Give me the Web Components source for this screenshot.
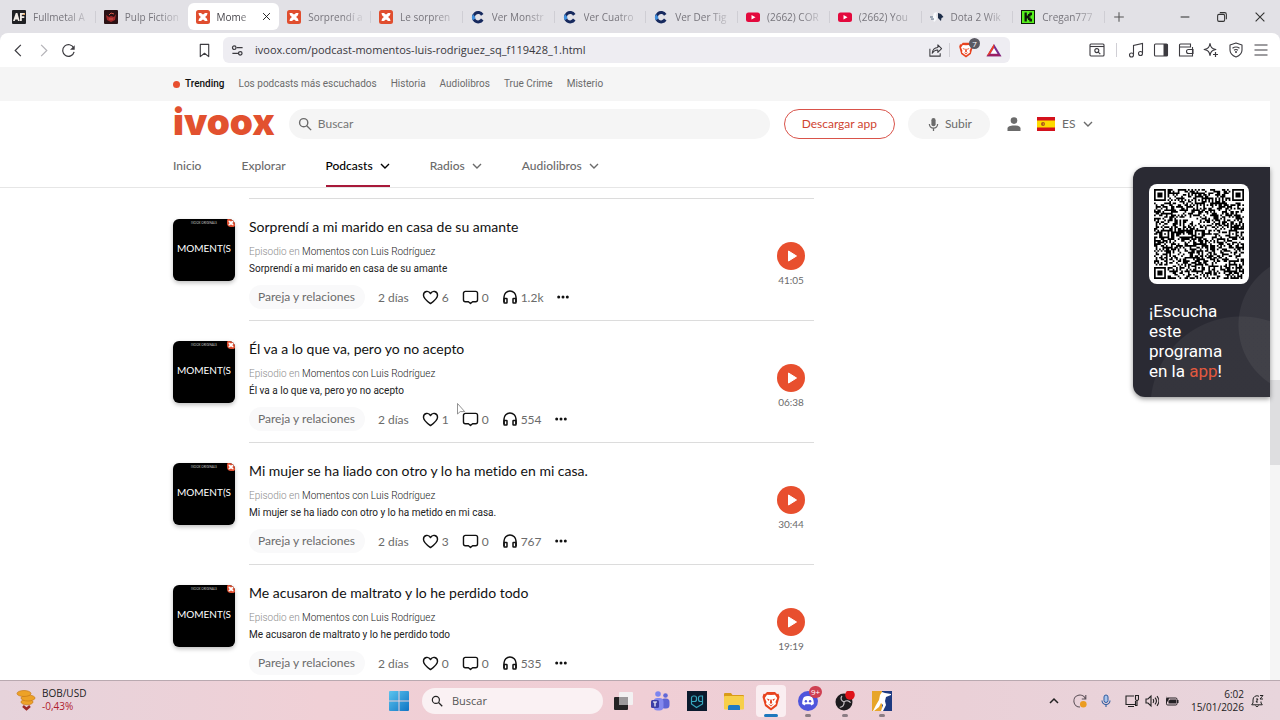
<!DOCTYPE html>
<html lang="es">
  <head>
    <meta charset="UTF-8" />
    <meta name="viewport" content="width=device-width, initial-scale=1.0" />
    <title>Momentos con Luis Rodríguez - iVoox</title>
    <style>
      :root {
        --system-font: "Open Sans", "Noto Sans", sans-serif;
        --page-font: Lato, "Open Sans", sans-serif;
        --small-font: Roboto, "Open Sans", sans-serif;
        --orange: #e84f2e;
      }
      body {
        margin: 0;
        height: 100vh;
        display: flex;
        flex-direction: column;
        overflow: hidden;
        font-family: var(--system-font);
        background: #fff;
      }
    </style>
  </head>
  <body>
    <browser-tabs></browser-tabs>
    <browser-toolbar url="ivoox.com/podcast-momentos-luis-rodriguez_sq_f119428_1.html"></browser-toolbar>
    <page-viewport>
      <trending-bar></trending-bar>
      <site-header></site-header>
      <episode-list>
        <episode-card time="41:05" likes="6" comments="0" plays="1.2k">Sorprendí a mi marido en casa de su amante</episode-card>
        <episode-card time="06:38" likes="1" comments="0" plays="554">Él va a lo que va, pero yo no acepto</episode-card>
        <episode-card time="30:44" likes="3" comments="0" plays="767">Mi mujer se ha liado con otro y lo ha metido en mi casa.</episode-card>
        <episode-card time="19:19" likes="0" comments="0" plays="535">Me acusaron de maltrato y lo he perdido todo</episode-card>
      </episode-list>
      <app-promo slot="overlay">¡Escucha este programa<br />en la <a href="#app">app</a>!</app-promo>
    </page-viewport>
    <task-bar></task-bar>
    <mouse-pointer></mouse-pointer>

    <script>
      // Icons, each one is [viewBox, markup]
      const ICONS = {
        back: ["0 0 16 16", '<path d="M10.5 2 4.5 8l6 6" fill="none" stroke="currentColor" stroke-width="1.3"/>'],
        forward: ["0 0 16 16", '<path d="M5.5 2l6 6-6 6" fill="none" stroke="currentColor" stroke-width="1.3"/>'],
        reload: ["0 0 16 16", '<path d="M14 9.5A6.2 6.2 0 1 1 13.6 5.300" fill="none" stroke="currentColor" stroke-width="1.3"/><path d="M14.600 2.300v5h-5z" fill="currentColor"/>'],
        bookmark: ["0 0 16 16", '<path d="M3.500 1.500h9v13L8 11l-4.500 3.500z" fill="none" stroke="currentColor" stroke-width="1.2" stroke-linejoin="round"/>'],
        tune: ["0 0 14 14", '<g fill="none" stroke="currentColor" stroke-width="1.3"><circle cx="3.500" cy="4" r="1.900"/><path d="M6 4h6.500M1.500 10h6"/><circle cx="10" cy="10" r="1.900"/></g>'],
        share: ["0 0 16 16", '<path d="M2 6v8h11v-3M4.500 11c.3-4 2.500-6 6-6.200V2l4 4-4 4V7.500C8 7.300 6 8.500 4.500 11z" fill="none" stroke="currentColor" stroke-width="1.1" stroke-linejoin="round"/>'],
        lion: ["0 0 20 20", '<path d="M6 1h8l2 2 1.500-.2L18.500 6 16 15l-6 4.500L4 15 1.500 6l1-3.200L4 3z" fill="#e8431f"/><path d="M10 4 6 3.800 3.800 7l1.700 4-.5 2 5 4 5-4-.5-2 1.700-4L14 3.800z" fill="#fff"/><path d="M5.500 7.500l3 .8-.7 1.700zM14.500 7.500l-3 .8.7 1.700zM9.300 8.500h1.400l.5 3.500L10 13l-1.200-1zM7 12.500l3 1.700 3-1.700-3 3z" fill="#e8431f"/>'],
        bat: ["0 0 18 16", '<path d="M9 1l8.500 14H.500z" fill="#7a2d8c"/><path d="M9 1 .500 15l4-2.500L9 5.500z" fill="#ef4023"/><path d="M.500 15h17l-4-2.500h-9z" fill="#9c1f63"/><path d="M9 5.700l4 6.600H5z" fill="#fff"/>'],
        winsearch: ["0 0 16 16", '<g fill="none" stroke="currentColor" stroke-width="1.1"><rect x="1" y="2" width="14" height="12" rx="1"/><path d="M1 4.500h14"/><circle cx="7.800" cy="8.600" r="2"/><path d="M9.300 10.200l2 2"/></g>'],
        music: ["0 0 16 16", '<g fill="none" stroke="currentColor" stroke-width="1.1"><path d="M5.500 12.500v-9L14.500 1.500v9.500"/><circle cx="3.500" cy="13" r="2"/><circle cx="12.500" cy="11.500" r="2"/></g>'],
        sidebar: ["0 0 16 16", '<rect x="1.500" y="2" width="13" height="12" rx="1" fill="none" stroke="currentColor" stroke-width="1.1"/><path d="M10.500 2h4v12h-4z" fill="currentColor"/>'],
        wallet: ["0 0 16 16", '<g fill="none" stroke="currentColor" stroke-width="1.100"><path d="M14.500 5V14h-13V3a1 1 0 0 1 1-1h10v3h-11"/><path d="M15 7.500h-4.500a2 2 0 0 0 0 4H15z"/></g>'],
        sparkle: ["0 0 16 16", '<path d="M7 1.500c.7 4 1.800 5 5.800 6-4 .8-5.100 2-5.800 6-.7-4-1.800-5.200-5.800-6 4-1 5.100-2 5.800-6z" fill="none" stroke="currentColor" stroke-width="1.200" stroke-linejoin="round"/><path d="M12.500 10v5M10 12.500h5" stroke="currentColor" stroke-width="1.200"/>'],
        vpn: ["0 0 16 16", '<g fill="none" stroke="currentColor" stroke-width="1.100"><path d="M8 1l6 2v5c0 3.500-2.500 5.700-6 7-3.500-1.300-6-3.500-6-7V3z" stroke-linejoin="round"/><path d="M4.500 6.300c2.200-1.700 4.800-1.700 7 0M6 8.300c1.300-1 2.700-1 4 0"/></g><circle cx="8" cy="10" r="1" fill="currentColor"/>'],
        menu: ["0 0 16 16", '<path d="M1.500 3h13M1.500 8h13M1.500 13h13" stroke="currentColor" stroke-width="1.200"/>'],
        plus: ["0 0 16 16", '<path d="M8 2.500v11M2.500 8h11" stroke="currentColor" stroke-width="1.200"/>'],
        minus: ["0 0 16 16", '<path d="M3 8h10" stroke="currentColor" stroke-width="1.200"/>'],
        restore: ["0 0 16 16", '<g fill="none" stroke="currentColor" stroke-width="1.200"><rect x="3" y="5" width="8" height="8" rx="1.500"/><path d="M5.500 3h5.500a2 2 0 0 1 2 2v5.500"/></g>'],
        close: ["0 0 16 16", '<path d="M3 3l10 10M13 3 3 13" stroke="currentColor" stroke-width="1.300"/>'],
        search: ["0 0 16 16", '<g fill="none" stroke="currentColor" stroke-width="1.600"><circle cx="6.500" cy="6.500" r="4.700"/><path d="M10 10l5 5"/></g>'],
        chevron: ["0 0 10 6", '<path d="M1 1l4 4 4-4" fill="none" stroke="currentColor" stroke-width="1.400"/>'],
        mic: ["0 0 12 16", '<rect x="3.700" y="1" width="4.600" height="9" rx="2.300" fill="currentColor"/><path d="M1.500 7.500a4.500 4.500 0 0 0 9 0M6 12v3" fill="none" stroke="currentColor" stroke-width="1.400"/>'],
        user: ["0 0 14 14", '<circle cx="7" cy="3.600" r="3.300" fill="currentColor"/><path d="M.500 14v-2.500c0-2 2.500-3 6.500-3s6.500 1 6.500 3V14z" fill="currentColor"/>'],
        spain: ["0 0 18 14", '<path d="M0 0h18v14H0z" fill="#d4121c"/><path d="M0 3.500h18v7H0z" fill="#fddb00"/><circle cx="6" cy="7" r="2" fill="#a8551c"/><circle cx="6.500" cy="7" r=".8" fill="#e9a21b"/>'],
        heart: ["0 0 18 16", '<path d="M9 14.500C3.500 10.500 1.500 8.300 1.500 5.500c0-4.500 5.500-5.500 7.500-1.700 2-3.800 7.500-2.800 7.500 1.700 0 2.800-2 5-7.500 9z" fill="none" stroke="currentColor" stroke-width="1.500" stroke-linejoin="round"/>'],
        comment: ["0 0 18 16", '<path d="M3.500 1.500h11a2 2 0 0 1 2 2v7a2 2 0 0 1-2 2h-3.300L9 14.500l-2.200-2H3.500a2 2 0 0 1-2-2v-7a2 2 0 0 1 2-2z" fill="none" stroke="currentColor" stroke-width="1.500" stroke-linejoin="round"/>'],
        headphones: ["0 0 16 16", '<path d="M2 13V8a6 6 0 0 1 12 0v5" fill="none" stroke="currentColor" stroke-width="1.500"/><g fill="none" stroke="currentColor" stroke-width="1.500"><rect x="2" y="9.500" width="3" height="4.500" rx=".5"/><rect x="11" y="9.500" width="3" height="4.500" rx=".5"/></g>'],
        dots: ["0 0 12 4", '<g fill="currentColor"><circle cx="1.700" cy="2" r="1.500"/><circle cx="6" cy="2" r="1.500"/><circle cx="10.300" cy="2" r="1.500"/></g>'],
        play: ["0 0 28 28", '<circle cx="14" cy="14" r="14" fill="#e84f2e"/><path d="M11.500 9l8 5-8 5z" fill="#fff" stroke="#fff" stroke-linejoin="round"/>'],
        ivoox: ["0 0 14 14", '<rect width="14" height="14" rx="2.500" fill="#e04e2f"/><path d="M2.500 3h2.700C6 4.800 8 4.800 8.800 3h2.700c-.2 2-1 3.200-2.500 4 1.500.8 2.300 2 2.500 4H8.800C8 9.200 6 9.200 5.200 11H2.500c.2-2 1-3.200 2.500-4-1.500-.8-2.300-2-2.500-4z" fill="#fff"/>'],
        af: ["0 0 14 14", '<rect width="14" height="14" rx="1" fill="#202124"/><path d="M1 11 3.800 3h1.600l2.300 8H6l-.4-1.600H3.300L2.800 11zM8 3h5v1.800H9.800v1.500h2.500V8H9.800v3H8z" fill="#f2ece6"/><path d="M10 4.800h3V3z" fill="#f0a24b"/>'],
        pulp: ["0 0 14 14", '<rect width="14" height="14" rx="1" fill="#2b1215"/><path d="M2 5l3 2 2-1 3 1 2-3-1 6-4 2-4-2z" fill="#a32a2b"/><path d="M5 5l2-2 3 1M5 9h4" stroke="#d65a4b" fill="none"/>'],
        cuevana: ["0 0 14 14", '<path d="M12.500 4 10 5.800A3.200 3.200 0 1 0 10 8.600l2.500 1.800A6.200 6.200 0 1 1 12.500 4z" fill="#16295e"/><path d="M.800 7a6.200 6.200 0 0 0 1 3.300l2.700-1.800A3 3 0 0 1 4.200 7L2 4z" fill="#3f8edc"/>'],
        youtube: ["0 0 14 14", '<rect y="2.500" width="14" height="9.500" rx="2.500" fill="#e3093d"/><path d="M5.500 5v4.500L9.500 7.200z" fill="#fff"/>'],
        dota: ["0 0 14 14", '<path d="M4 3l3-1-1 3 1 4-3 3-1-3H.500L3 6z" fill="#f8fafc"/><path d="M0 7h3M1 9h3" stroke="#51657c"/><path d="M8 3l3 1 2.500 3-2 1-.5 3-3-3z" fill="#1e2e49"/>'],
        kick: ["0 0 14 14", '<rect width="14" height="14" fill="#0d1a08"/><path d="M1 1h12v12H1z" fill="#56ef1e"/><path d="M3.500 2.500h2.300v3H7V4h1.300V2.500h2.700v2.800H9.700v1.200H8.500v1h1.200v1.200H11v2.800H8.300V10H7V8.500H5.800v3H3.500z" fill="#0d1a08"/>'],
        coins: ["0 0 20 22", '<g fill="#eda227" stroke="#c87a16" stroke-width=".7"><ellipse cx="11" cy="13" rx="6" ry="2.800"/><ellipse cx="12" cy="9" rx="7" ry="3"/><ellipse cx="8" cy="4.500" rx="7" ry="3"/></g><path d="M7 17l3.500 3 3.500-3" fill="none" stroke="#9d2825" stroke-width="2.500"/>'],
        windows: ["0 0 20 20", '<defs><linearGradient id="w" x1="0" y1="0" x2="1" y2="1"><stop stop-color="#5cc4ee"/><stop offset="1" stop-color="#0f74c4"/></linearGradient></defs><path d="M0 1a1 1 0 0 1 1-1h8.500v9.500H0zM10.500 0H19a1 1 0 0 1 1 1v8.500h-9.500zM0 10.500h9.500V20H1a1 1 0 0 1-1-1zM10.500 10.500H20V19a1 1 0 0 1-1 1h-8.500z" fill="url(#w)"/>'],
        taskview: ["0 0 20 20", '<rect x="6" y="1" width="14" height="13" rx="1" fill="#f3f1f2"/><rect x="1" y="6" width="14" height="13" rx="1" fill="#242324"/><path d="M6 6h9v8H6z" fill="#9c999b"/>'],
        teams: ["0 0 20 20", '<circle cx="8" cy="3" r="2.800" fill="#7c85ef"/><circle cx="15.500" cy="4.500" r="2.300" fill="#6168d8"/><rect x="11" y="7.500" width="8.500" height="10" rx="3.500" fill="#5e64d4"/><rect x="3.500" y="7" width="10" height="12.500" rx="4" fill="#8388ee"/><rect x="1" y="9" width="8" height="8" rx="1.500" fill="#3c3fa7"/><path d="M3 11h4M5 11v4.500" stroke="#fff" stroke-width="1.200"/>'],
        shieldapp: ["0 0 20 20", '<path d="M0 0h20v20H0z" fill="#0a1a2d"/><g fill="none" stroke="#36a6bd" stroke-width="1.200"><path d="M4.500 10.500V7a2 2 0 0 1 2-2h1a2 2 0 0 1 2 2v1.500a2 2 0 0 1-2 2H4.500v2.500l5 3.500 6-3.500V5h-2a2 2 0 0 0-2 2v1.500a2 2 0 0 0 2 2h2"/></g>'],
        folder: ["0 0 20 20", '<path d="M0 3a1 1 0 0 1 1-1h6l1.500 2H19a1 1 0 0 1 1 1v4H0z" fill="#d99b18"/><rect y="5" width="20" height="13.500" rx="1" fill="#f7cf4a"/><path d="M4 19v-3.500a1.500 1.500 0 0 1 1.500-1.500h9a1.500 1.500 0 0 1 1.500 1.500V19z" fill="#217ac4"/>'],
        discord: ["0 0 20 20", '<circle cx="10" cy="10" r="10" fill="#4e55dc"/><path d="M6 6c2.500-1.200 5.500-1.200 8 0 1.300 2 2 4.500 1.800 7l-2.500 1.500-.8-1.200h-5l-.8 1.200L4.200 13C4 10.500 4.700 8 6 6z" fill="#fff"/><circle cx="7.900" cy="10.300" r="1.200" fill="#4e55dc"/><circle cx="12.100" cy="10.300" r="1.200" fill="#4e55dc"/>'],
        obs: ["0 0 20 20", '<circle cx="9" cy="11" r="8.500" fill="#1d1b1e"/><g fill="none" stroke="#c9c4c8" stroke-width="1.200"><path d="M9 11c-3-1-3.800-4-2-6M9 11c2.300-2 5.500-1.500 6.500.8M9 11c.5 3.300-1.700 5.500-4.200 5.200"/></g><circle cx="15" cy="4" r="4.800" fill="#df1219"/>'],
        cs: ["0 0 20 20", '<path d="M0 0h10v20H0z" fill="#e7a52a"/><path d="M10 0h10v20H10z" fill="#1d3a80"/><path d="M10 1l3 1 6 1v1l-5 2-1 4 1 4-3 6H9l2-6-2-2-2 4-5 4H1l3-6 3-5 1-5z" fill="#fff"/>'],
        caret: ["0 0 14 14", '<path d="M3 9l4-4 4 4" fill="none" stroke="currentColor" stroke-width="1.500"/>'],
        sync: ["0 0 14 14", '<path d="M12.500 5A6 6 0 1 0 7 13M12.800 1v4h-4" fill="none" stroke="#5c5058" stroke-width="1.100"/><circle cx="10.300" cy="10.200" r="3.300" fill="#eb9c20"/>'],
        traymic: ["0 0 14 14", '<rect x="5" y="1" width="4" height="7.500" rx="2" fill="#a9c4ec" stroke="#2f5c9f"/><path d="M3 6.500a4 4 0 0 0 8 0M7 10.500V13" fill="none" stroke="#2f5c9f" stroke-width="1.100"/>'],
        monitor: ["0 0 14 14", '<g fill="none" stroke="currentColor" stroke-width="1.100"><path d="M9 2H1v8.500h9.500V7M3 12.500h6M12 6v5.500h-2"/><path d="M10.500 1.500h3V5a1.500 1.500 0 0 1-3 0z"/></g>'],
        speaker: ["0 0 14 14", '<g fill="none" stroke="currentColor" stroke-width="1.100"><path d="M1 5v4h2l3 3V2L3 5zM8 5.200a3 3 0 0 1 0 3.600M10 3.700a5 5 0 0 1 0 6.600M12 2.200a7.500 7.500 0 0 1 0 9.600"/></g>'],
        battery: ["0 0 14 14", '<rect x="1.500" y="4" width="10.500" height="7" rx="1.200" fill="none" stroke="#242124"/><path d="M5 5.500h6v4H3.500V7zM12 6h1.500v3H12z" fill="#242124"/><path d="M1 6l1-4v2h2L3 8z" fill="#242124"/>'],
        bell: ["0 0 14 14", '<path d="M9 2.300A4 4 0 0 0 3 6v3l-1.300 1.800h10.600L11 9V7.500M5.500 11.500c.5 1.500 2.500 1.500 3 0M6 5h2L6 8h2M10 1.500h3l-3 3.500h3" fill="none" stroke="currentColor" stroke-width="1"/>'],
      };

      // <ui-icon name="back" size="16">
      class UiIcon extends HTMLElement {
        connectedCallback() {
          const [box, markup] = ICONS[this.getAttribute("name")];
          const [, , w, h] = box.split(" ");
          const width = Number(this.getAttribute("size")) || Number(w);
          const height = Math.round((width * h) / w);
          this.attachShadow({ mode: "open" }).innerHTML = `
            <style>
              :host { display: inline-flex; flex: none; }
              svg { display: block; }
            </style>
            <svg width="${width}" height="${height}" viewBox="${box}" aria-hidden="true">${markup}</svg>`;
        }
      }

      // Shared reset for the controls inside the shadow roots
      const RESET = `
        * { box-sizing: border-box; }
        button, input, select {
          margin: 0; padding: 0; border: 0; background: none;
          font: inherit; color: inherit; outline: none;
        }
        button { display: inline-flex; align-items: center; justify-content: center; }
        select { appearance: none; }
        a { color: inherit; text-decoration: none; }
      `;

      // Tab strip
      class BrowserTabs extends HTMLElement {
        connectedCallback() {
          const tabs = [
            ["af", "Fullmetal A"],
            ["pulp", "Pulp Fiction"],
            ["ivoox", "Mome", true],
            ["ivoox", "Sorprendí a"],
            ["ivoox", "Le sorpren"],
            ["cuevana", "Ver Monstr"],
            ["cuevana", "Ver Cuatro"],
            ["cuevana", "Ver Der Tig"],
            ["youtube", "(2662) COR"],
            ["youtube", "(2662) You"],
            ["dota", "Dota 2 Wik"],
            ["kick", "Cregan777"],
          ];
          this.attachShadow({ mode: "open" }).innerHTML = `
            <style>
              ${RESET}
              :host { display: flex; flex: none; height: 33px; background: #e2e1e6; font-size: 10px; color: #77757c; }
              .tabs { flex: 1; min-width: 0; display: flex; padding-left: 4px; }
              .tab {
                flex: 1 1 0; min-width: 0; display: flex; align-items: center; gap: 7px;
                margin: 3px 0; padding: 0 7px 0 8px; border-radius: 6px; justify-content: flex-start;
                position: relative;
              }
              .tab:not(.active)::after {
                content: ""; position: absolute; right: 0; top: 8px; height: 12px; width: 1px; background: #cfced4;
              }
              .tab:nth-child(2)::after { display: none; }
              .tab.active { background: #fff; color: #47454b; }
              .title {
                flex: 1; min-width: 0; overflow: hidden; white-space: nowrap; text-align: left; line-height: 16px;
                mask-image: linear-gradient(90deg, #000 60%, rgba(0, 0, 0, 0.2) 95%);
              }
              .active ui-icon:last-child { color: #111; }
              .window { display: flex; align-items: center; padding: 0 12px 0 6px; color: #333; }
              .window button { width: 16px; height: 16px; }
              .new { margin-right: 50px; color: #555; }
              .min { margin-right: 21px; }
              .max { margin-right: 22px; }
            </style>
            <div class="tabs" role="tablist">
              ${tabs
                .map(
                  ([icon, title, active]) => `
                <button class="tab ${active ? "active" : ""}" role="tab">
                  <ui-icon name="${icon}"></ui-icon>
                  <span class="title">${title}</span>
                  ${active ? '<ui-icon name="close" size="11"></ui-icon>' : ""}
                </button>`
                )
                .join("")}
            </div>
            <div class="window">
              <button class="new" aria-label="Nueva pestaña"><ui-icon name="plus" size="14"></ui-icon></button>
              <button class="min" aria-label="Minimizar"><ui-icon name="minus" size="14"></ui-icon></button>
              <button class="max" aria-label="Restaurar"><ui-icon name="restore" size="14"></ui-icon></button>
              <button aria-label="Cerrar"><ui-icon name="close" size="14"></ui-icon></button>
            </div>`;
        }
      }

      // Navigation buttons and address bar
      class BrowserToolbar extends HTMLElement {
        connectedCallback() {
          this.attachShadow({ mode: "open" }).innerHTML = `
            <style>
              ${RESET}
              :host {
                display: flex; flex: none; align-items: center; height: 34px; background: #fff;
                padding: 0 11px; color: #3c3b40; font-size: 11px;
                border-radius: 8px 8px 0 0; box-shadow: 0 -8px 0 #e2e1e6;
              }
              .nav { display: flex; gap: 10px; }
              .nav button:nth-child(2) { color: #b4b3b8; }
              .mark { margin: 0 11px 0 121px; }
              .address {
                flex: 1; display: flex; align-items: center; height: 26px; padding: 0 8px;
                background: #eeedf2; border-radius: 6px;
              }
              .address input { flex: 1; min-width: 0; height: 20px; margin-left: 11px; padding-bottom: 2px; color: #38373c; }
              .sep { width: 1px; height: 14px; background: #d0cfd5; margin: 0 8px 0 6px; }
              .shield { position: relative; margin-right: 12px; }
              .count {
                position: absolute; right: -6px; top: -4px; width: 11px; height: 11px; border-radius: 50%;
                background: #5a5962; color: #fff; font-size: 8px; line-height: 11px; text-align: center;
              }
              .tools { display: flex; align-items: center; gap: 9px; margin-left: 79px; }
              .tools .sep { margin: 0 2px; }
            </style>
            <div class="nav">
              <button aria-label="Atrás"><ui-icon name="back" size="15"></ui-icon></button>
              <button aria-label="Adelante"><ui-icon name="forward" size="15"></ui-icon></button>
              <button aria-label="Recargar"><ui-icon name="reload" size="15"></ui-icon></button>
            </div>
            <button class="mark" aria-label="Guardar"><ui-icon name="bookmark" size="15"></ui-icon></button>
            <div class="address">
              <ui-icon name="tune" size="13"></ui-icon>
              <input aria-label="Dirección" value="${this.getAttribute("url")}" />
              <button aria-label="Compartir"><ui-icon name="share" size="15"></ui-icon></button>
              <span class="sep"></span>
              <button class="shield" aria-label="Shields"><ui-icon name="lion" size="16"></ui-icon><span class="count">7</span></button>
              <button aria-label="Rewards"><ui-icon name="bat" size="16"></ui-icon></button>
            </div>
            <div class="tools">
              <button aria-label="Buscar pestañas"><ui-icon name="winsearch"></ui-icon></button>
              <span class="sep"></span>
              ${["music", "sidebar", "wallet", "sparkle", "vpn", "menu"]
                .map((name) => `<button aria-label="${name}"><ui-icon name="${name}"></ui-icon></button>`)
                .join("")}
            </div>`;
        }
      }

      // Scrolling area of the page, with its scrollbar
      class PageViewport extends HTMLElement {
        connectedCallback() {
          this.attachShadow({ mode: "open" }).innerHTML = `
            <style>
              :host {
                display: flex; flex: 1; min-height: 0; overflow: hidden; position: relative;
                font-family: var(--page-font); font-size: 12px; font-variant-ligatures: none;
                color: #6b6b6b; background: #fff;
              }
              main { flex: 1; min-width: 0; }
              .bar { width: 10px; flex: none; background: #f5f5f5; display: flex; flex-direction: column; }
              .bar::before { content: ""; flex: 51; }
              .thumb { flex: 14; background: #dedee0; }
              .bar::after { content: ""; flex: 35; }
            </style>
            <main><slot></slot></main>
            <div class="bar"><div class="thumb"></div></div>
            <slot name="overlay"></slot>`;
        }
      }

      class TrendingBar extends HTMLElement {
        connectedCallback() {
          const topics = ["Los podcasts más escuchados", "Historia", "Audiolibros", "True Crime", "Misterio"];
          this.attachShadow({ mode: "open" }).innerHTML = `
            <style>
              ${RESET}
              :host { display: block; background: #f5f5f5; font: 10px/16px var(--small-font); }
              nav { display: flex; align-items: center; gap: 14px; max-width: 924px; height: 34px; margin: 0 auto; }
              strong { display: flex; align-items: center; gap: 5px; color: #111; font-weight: 500; }
              strong::before { content: ""; width: 7px; height: 7px; border-radius: 50%; background: var(--orange); }
            </style>
            <nav>
              <strong>Trending</strong>
              ${topics.map((topic) => `<a href="#">${topic}</a>`).join("")}
            </nav>`;
        }
      }

      // Logo, search box, account buttons and main menu
      class SiteHeader extends HTMLElement {
        connectedCallback() {
          this.attachShadow({ mode: "open" }).innerHTML = `
            <style>
              ${RESET}
              :host { display: block; border-bottom: 1px solid #e6e6e6; line-height: 16px; }
              .top, nav { display: flex; max-width: 924px; margin: 0 auto; }
              .top { align-items: center; height: 38px; padding-top: 8px; }
              .logo { font: 900 37px/30px Inter, sans-serif; color: #e2512f; margin-right: 14px; padding-bottom: 4px; }
              .search {
                flex: 1; display: flex; align-items: center; gap: 6px; height: 30px; padding: 0 9px;
                background: #f5f5f5; border-radius: 15px; margin-right: 14px;
              }
              .search input { flex: 1; min-width: 0; }
              .search input::placeholder { color: #757575; opacity: 1; }
              .app { height: 30px; padding: 0 17px; border: 1px solid #d9534a; border-radius: 15px; color: #cf4431; }
              .upload { height: 30px; padding: 0 18px 0 20px; gap: 6px; margin: 0 17px 0 13px; border-radius: 15px; background: #f5f5f5; }
              .lang { display: flex; align-items: center; gap: 7px; margin: 0 4px 0 16px; }
              nav { gap: 40px; font-weight: 500; }
              nav a { display: flex; align-items: center; gap: 7px; padding: 19px 0 11px; border-bottom: 2px solid transparent; }
              nav a.current { color: #000; border-color: #a8193a; }
            </style>
            <div class="top">
              <a class="logo" href="#">ivoox</a>
              <label class="search">
                <ui-icon name="search" size="14"></ui-icon>
                <input type="text" placeholder="Buscar" aria-label="Buscar" />
              </label>
              <button class="app">Descargar app</button>
              <button class="upload"><ui-icon name="mic" size="11"></ui-icon>Subir</button>
              <button aria-label="Cuenta"><ui-icon name="user"></ui-icon></button>
              <label class="lang">
                <ui-icon name="spain"></ui-icon>
                <select aria-label="Idioma"><option>ES</option></select>
                <ui-icon name="chevron"></ui-icon>
              </label>
            </div>
            <nav>
              <a href="#">Inicio</a>
              <a href="#">Explorar</a>
              <a href="#" class="current">Podcasts <ui-icon name="chevron"></ui-icon></a>
              <a href="#">Radios <ui-icon name="chevron"></ui-icon></a>
              <a href="#">Audiolibros <ui-icon name="chevron"></ui-icon></a>
            </nav>`;
        }
      }

      class EpisodeList extends HTMLElement {
        connectedCallback() {
          this.attachShadow({ mode: "open" }).innerHTML = `
            <style>
              :host { display: block; max-width: 924px; margin: 0 auto; padding-top: 10px; }
              section { max-width: 641px; }
            </style>
            <section><slot></slot></section>`;
        }
      }

      // Square artwork of the podcast
      class PodcastCover extends HTMLElement {
        connectedCallback() {
          this.attachShadow({ mode: "open" }).innerHTML = `
            <style>
              :host {
                display: flex; align-items: center; justify-content: center; position: relative; overflow: hidden;
                width: 62px; height: 62px; border-radius: 6px; background: #000; color: #fff;
                box-shadow: 0 2px 4px rgba(0, 0, 0, 0.25);
                font: 10px/12px Lato, sans-serif;
              }
              .name { padding-bottom: 4px; }
              small { position: absolute; top: 2px; left: 0; right: 0; font-size: 3px; line-height: 4px; text-align: center; color: #ccc; }
              .badge { position: absolute; top: 0; right: 0; border-radius: 0 0 0 4px; overflow: hidden; }
            </style>
            <small>IVOOX ORIGINALS</small>
            <span class="name">MOMENT(S</span>
            <ui-icon class="badge" name="ivoox" size="8"></ui-icon>`;
        }
      }

      class EpisodeCard extends HTMLElement {
        connectedCallback() {
          const title = this.textContent;
          const stat = (icon, name, size) =>
            `<button class="stat"><ui-icon name="${icon}" size="${size}"></ui-icon>${this.getAttribute(name)}</button>`;
          this.attachShadow({ mode: "open" }).innerHTML = `
            <style>
              ${RESET}
              :host { display: flex; gap: 14px; }
              podcast-cover { flex: none; margin-top: 21px; }
              article {
                flex: 1; display: flex; align-items: center; justify-content: space-between;
                padding: 19px 0 11px; border-top: 1px solid #dcdcdc;
              }
              h3 { margin: 0 0 7px; font-size: 14px; line-height: 18px; font-weight: 400; color: #111; }
              p { margin: 0; font: 10px/17px var(--small-font); color: #222; }
              p.show { color: #8c8c8c; font-weight: 300; }
              p.show a { color: #222; }
              .meta { display: flex; align-items: center; gap: 13px; height: 24px; margin-top: 8px; }
              .tag { height: 24px; line-height: 24px; padding: 0 10px 0 9px; border-radius: 12px; background: #f9f9fa; }
              .stat { gap: 3px; }
              .stat ui-icon, .more { color: #111; }
              .player { display: flex; flex-direction: column; align-items: center; gap: 3px; width: 46px; font-size: 10px; line-height: 14px; padding-top: 2px; }
            </style>
            <podcast-cover></podcast-cover>
            <article>
              <div>
                <h3><slot></slot></h3>
                <p class="show">Episodio en <a href="#">Momentos con Luis Rodríguez</a></p>
                <p>${title}</p>
                <div class="meta">
                  <a class="tag" href="#">Pareja y relaciones</a>
                  <span>2 días</span>
                  ${stat("heart", "likes", 17)}
                  ${stat("comment", "comments", 17)}
                  ${stat("headphones", "plays", 16)}
                  <button class="more" aria-label="Más opciones"><ui-icon name="dots"></ui-icon></button>
                </div>
              </div>
              <div class="player">
                <button aria-label="Reproducir"><ui-icon name="play"></ui-icon></button>
                <time>${this.getAttribute("time")}</time>
              </div>
            </article>`;
        }
      }

      // QR symbol: 53 modules a side, finder, timing and alignment patterns over a seeded fill
      class QrCode extends HTMLElement {
        connectedCallback() {
          const n = 53;
          const grid = [];
          let seed = 119428;
          for (let i = 0; i < n * n; i++) {
            seed = (seed * 1103515245 + 12345) % 2147483648;
            grid.push(seed / 2147483648 < 0.5);
          }
          const ring = (cx, cy, max, isDark) => {
            for (let y = -max; y <= max; y++) {
              for (let x = -max; x <= max; x++) {
                const px = cx + x;
                const py = cy + y;
                if (px < 0 || py < 0 || px >= n || py >= n) continue;
                grid[py * n + px] = isDark(Math.max(Math.abs(x), Math.abs(y)));
              }
            }
          };
          for (let i = 0; i < n; i++) grid[6 * n + i] = grid[i * n + 6] = i % 2 === 0;
          [[26, 6], [6, 26], [26, 26], [46, 26], [26, 46], [46, 46]].forEach(([x, y]) => ring(x, y, 2, (d) => d !== 1));
          [[3, 3], [49, 3], [3, 49]].forEach(([x, y]) => ring(x, y, 4, (d) => d < 2 || d === 3));
          const path = grid.map((on, i) => (on ? `M${i % n} ${Math.floor(i / n)}h1v1h-1z` : "")).join("");
          this.attachShadow({ mode: "open" }).innerHTML = `
            <style>
              :host { display: block; box-sizing: border-box; width: 100px; padding: 5px; border-radius: 8px; background: #fff; }
              svg { display: block; }
            </style>
            <svg viewBox="0 0 ${n} ${n}" role="img" aria-label="Código QR"><path d="${path}" /></svg>`;
        }
      }

      class AppPromo extends HTMLElement {
        connectedCallback() {
          this.attachShadow({ mode: "open" }).innerHTML = `
            <style>
              :host {
                position: absolute; top: 100px; right: 10px; box-sizing: border-box; width: 137px;
                padding: 17px 16px 16px; border-radius: 12px 0 0 12px; color: #fff;
                background:
                  radial-gradient(circle at 175px 158px, rgba(255, 255, 255, 0.06) 69px, transparent 70px),
                  radial-gradient(circle at 108px 240px, rgba(255, 255, 255, 0.05) 90px, transparent 91px),
                  #2a2a33;
                box-shadow: 0 2px 5px rgba(0, 0, 0, 0.4);
              }
              p { width: 80px; margin: 17px 0 0; font: 17px/20px var(--small-font); }
              ::slotted(a) { color: #e2593f; text-decoration: none; }
            </style>
            <qr-code></qr-code>
            <p><slot></slot></p>`;
        }
      }

      // Windows taskbar
      class TaskBar extends HTMLElement {
        connectedCallback() {
          const apps = [
            ["taskview"],
            ["teams"],
            ["shieldapp"],
            ["folder"],
            ["lion", "active"],
            ["discord", "running", '<span class="badge">9+</span>'],
            ["obs", "running"],
            ["cs", "running"],
          ];
          this.attachShadow({ mode: "open" }).innerHTML = `
            <style>
              ${RESET}
              :host {
                display: grid; grid-template-columns: 1fr auto 1fr; align-items: center; flex: none;
                height: 40px; padding-left: 6px; border-top: 1px solid #b9a9b0; box-sizing: border-box;
                background: linear-gradient(90deg, #e6d3db, #f0d0d6 25%, #f0ced5 50%, #ead0d7 75%, #e8d5dc);
                color: #222; font-size: 10px; line-height: 13px;
              }
              .widget { display: flex; align-items: center; gap: 6px; justify-self: start; padding: 0 0 2px 10px; text-align: left; }
              .widget small { display: block; font-size: 10px; color: #b0202c; }
              .center { display: flex; align-items: center; }
              .search {
                display: flex; align-items: center; gap: 9px; width: 181px; height: 26px; margin: 0 5px 0 13px;
                padding: 0 9px; border-radius: 13px; background: #faf1f3; font-size: 11px;
              }
              .search input { flex: 1; min-width: 0; }
              .search input::placeholder { color: #555; opacity: 1; }
              .apps { display: flex; gap: 7px; }
              .app { position: relative; width: 30px; height: 32px; border-radius: 4px; }
              .active { background: #faeef1; }
              .active::after, .running::after {
                content: ""; position: absolute; bottom: 0; left: 12px; width: 6px; height: 3px; border-radius: 2px; background: #8b7d84;
              }
              .active::after { left: 8px; width: 14px; background: #1d78bd; }
              .badge {
                position: absolute; top: 1px; right: 1px; width: 13px; height: 12px; border-radius: 6px;
                background: #cf4052; color: #fff; font-size: 8px; line-height: 12px;
              }
              .tray { display: flex; align-items: center; justify-self: end; gap: 6px; padding-right: 16px; }
              .tray .first { margin-right: 6px; }
              .clock { text-align: right; margin-left: 6px; }
              .mic { margin: 0 6px; }
            </style>
            <button class="widget"><ui-icon name="coins"></ui-icon><span>BOB/USD<small>-0,43%</small></span></button>
            <div class="center">
              <button aria-label="Inicio"><ui-icon name="windows"></ui-icon></button>
              <label class="search">
                <ui-icon name="search" size="12"></ui-icon>
                <input type="text" placeholder="Buscar" aria-label="Buscar en Windows" />
              </label>
              <div class="apps">
                ${apps
                  .map(
                    ([icon, state = "", extra = ""]) =>
                      `<button class="app ${state}" aria-label="${icon}"><ui-icon name="${icon}" size="20"></ui-icon>${extra}</button>`
                  )
                  .join("")}
              </div>
            </div>
            <div class="tray">
              <ui-icon class="first" name="caret"></ui-icon>
              <ui-icon name="sync"></ui-icon>
              <ui-icon class="mic" name="traymic"></ui-icon>
              <ui-icon name="monitor"></ui-icon>
              <ui-icon name="speaker"></ui-icon>
              <ui-icon name="battery"></ui-icon>
              <div class="clock">6:02<br />15/01/2026</div>
              <ui-icon name="bell"></ui-icon>
            </div>`;
        }
      }

      class MousePointer extends HTMLElement {
        connectedCallback() {
          this.attachShadow({ mode: "open" }).innerHTML = `
            <style>
              :host { position: absolute; left: 457px; top: 403px; pointer-events: none; }
              svg { display: block; }
            </style>
            <svg width="9" height="14" viewBox="0 0 9 14"><path d="M.5.500v10.500l2.700-2.400h4.500z" fill="#fff" stroke="#777" stroke-width=".8" /></svg>`;
        }
      }

      customElements.define("ui-icon", UiIcon);
      customElements.define("browser-tabs", BrowserTabs);
      customElements.define("browser-toolbar", BrowserToolbar);
      customElements.define("page-viewport", PageViewport);
      customElements.define("trending-bar", TrendingBar);
      customElements.define("site-header", SiteHeader);
      customElements.define("episode-list", EpisodeList);
      customElements.define("podcast-cover", PodcastCover);
      customElements.define("episode-card", EpisodeCard);
      customElements.define("qr-code", QrCode);
      customElements.define("app-promo", AppPromo);
      customElements.define("task-bar", TaskBar);
      customElements.define("mouse-pointer", MousePointer);
    </script>
  </body>
</html>
